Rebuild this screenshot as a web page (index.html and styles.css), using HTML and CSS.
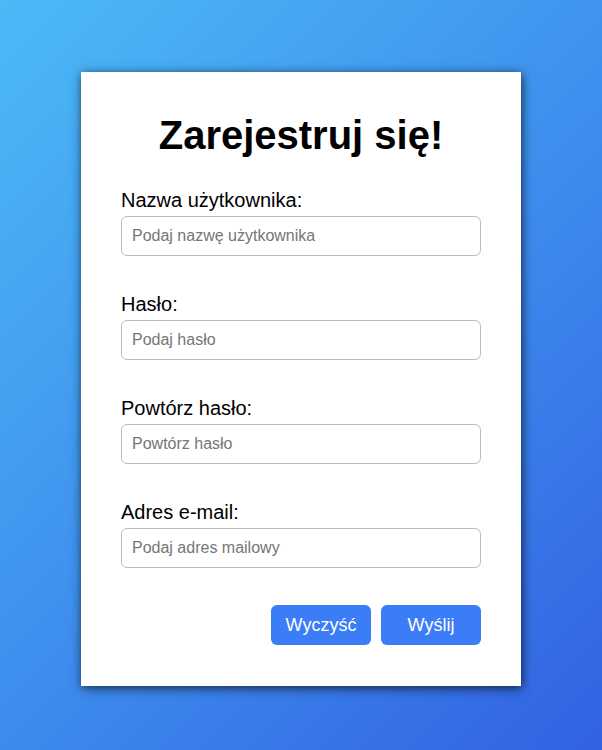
FILE: index.html
```html
<!DOCTYPE html>
<html lang="pl">
<head>
<meta charset="utf-8">
<title>Rejestracja</title>
<link rel="stylesheet" href="styles.css">
</head>
<body>
<main class="card">
  <h1 class="title">Zarejestruj się!</h1>
  <form class="form">
    <div class="field">
      <label class="label" for="u">Nazwa użytkownika:</label>
      <input class="input" id="u" type="text" placeholder="Podaj nazwę użytkownika">
    </div>
    <div class="field">
      <label class="label" for="p">Hasło:</label>
      <input class="input" id="p" type="password" placeholder="Podaj hasło">
    </div>
    <div class="field">
      <label class="label" for="p2">Powtórz hasło:</label>
      <input class="input" id="p2" type="password" placeholder="Powtórz hasło">
    </div>
    <div class="field">
      <label class="label" for="e">Adres e-mail:</label>
      <input class="input" id="e" type="email" placeholder="Podaj adres mailowy">
    </div>
    <div class="actions">
      <button class="btn" type="reset">Wyczyść</button>
      <button class="btn" type="submit">Wyślij</button>
    </div>
  </form>
</main>
</body>
</html>
```
FILE: styles.css
```css
* { box-sizing: border-box; }
html, body { margin: 0; padding: 0; }
body {
  min-height: 750px;
  background: linear-gradient(135deg, #4bbaf7 0%, #3f90ee 50%, #3161e2 100%);
  font-family: "Liberation Sans", Arial, sans-serif;
  display: flex;
  justify-content: center;
  align-items: flex-start;
  padding-top: 72px;
}
.card {
  width: 440px;
  background: #fff;
  padding: 40px 40px 41px;
  box-shadow: 1px 2px 10px rgba(0, 0, 0, 0.7);
}
.title {
  margin: 0 0 31px;
  font-size: 40px;
  line-height: 46px;
  font-weight: bold;
  text-align: center;
  color: #000;
}
.form { display: flex; flex-direction: column; }
.field { display: flex; flex-direction: column; margin-bottom: 37px; }
.field:last-of-type { margin-bottom: 35px; }
.label {
  font-size: 20px;
  line-height: 23px;
  color: #000;
  margin-bottom: 4px;
}
.input {
  width: 360px;
  height: 40px;
  border: 1px solid #bdbdbd;
  border-radius: 6px;
  padding: 0 10px;
  font-family: "Liberation Sans", Arial, sans-serif;
  font-size: 16px;
  color: #000;
  background: #fff;
  outline: none;
}
.input::placeholder { color: #767676; }
.actions { display: flex; justify-content: flex-end; gap: 10px; }
.btn {
  width: 100px;
  height: 40px;
  border: none;
  border-radius: 6px;
  background: #3b7cf7;
  color: #fff;
  font-family: "Liberation Sans", Arial, sans-serif;
  font-size: 18px;
  cursor: pointer;
}
```
